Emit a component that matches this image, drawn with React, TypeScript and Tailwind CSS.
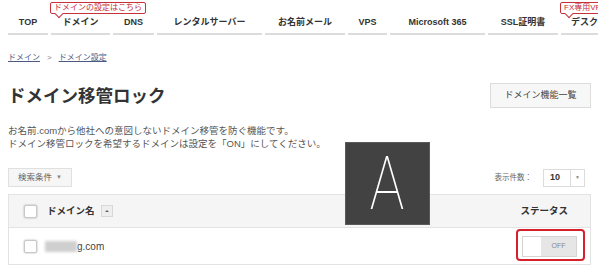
import React from 'react'

const font = "font-['Liberation_Sans','Noto_Sans_CJK_JP',sans-serif]"

const navItems = [
    { label: 'TOP', width: 'w-[40px]' },
    { label: 'ドメイン', width: 'w-[59px]' },
    { label: 'DNS', width: 'w-[41px]' },
    { label: 'レンタルサーバー', width: 'w-[105px]' },
    { label: 'お名前メール', width: 'w-[80px]' },
    { label: 'VPS', width: 'w-[39px]' },
    { label: 'Microsoft 365', width: 'w-[95px]' },
    { label: 'SSL証明書', width: 'w-[70px]' },
    { label: 'デスクトップクラウド', width: 'w-[110px]' },
]

const Tip: React.FC<{ text: string; className: string }> = ({ text, className }) => (
    <div className={`absolute top-[2px] h-[12px] px-[3px] border border-[#c8303a] rounded-[2px] bg-white text-[8px] leading-[10px] text-[#c8303a] whitespace-nowrap ${className}`}>
        {text}
        <span className="absolute left-[5px] -bottom-[4px] w-[6px] h-[6px] rotate-45 bg-white border-r border-b border-[#c8303a]" />
    </div>
)

const Checkbox: React.FC = () => (
    <span className="block w-[13px] h-[13px] rounded-[2px] bg-white border border-[#c9c9c9] shadow-[0_0_2px_rgba(0,0,0,0.35)]" />
)

export default function App() {
    return (
        <div className={`relative w-[598px] h-[274px] overflow-hidden bg-white ${font}`}>
            {/* global nav */}
            <div className="relative">
                <nav className="flex gap-[3px] pl-[8px] pt-[12px] whitespace-nowrap">
                    {navItems.map((item) => (
                        <div
                            key={item.label}
                            className={`${item.width} shrink-0 h-[23px] flex items-center justify-center border-b-2 border-[#dcdcdc] text-[9px] font-bold text-[#333]`}
                        >
                            {item.label}
                        </div>
                    ))}
                </nav>
                <Tip text="ドメインの設定はこちら" className="left-[50px]" />
                <Tip text="FX専用VPS" className="left-[560px]" />
            </div>

            <div className="pl-[8px] pr-[7px]">
                {/* breadcrumb */}
                <div className="mt-[17px] flex items-center text-[8px] leading-[12px]">
                    <span className="text-[#4b5a82] underline">ドメイン</span>
                    <span className="mx-[7px] text-[#888]">&gt;</span>
                    <span className="text-[#4b5a82] underline">ドメイン設定</span>
                </div>

                {/* title */}
                <div className="mt-[19px] h-[25px] flex items-center justify-between">
                    <h1 className="pt-[3px] text-[17.5px] font-bold text-[#333] leading-none">ドメイン移管ロック</h1>
                    <button className="w-[101px] h-[25px] border border-[#dcdcdc] bg-[#f7f7f7] text-[9px] text-[#444]">
                        ドメイン機能一覧
                    </button>
                </div>

                {/* description */}
                <p className="mt-[16px] text-[9.5px] leading-[13px] text-[#555]">
                    お名前.comから他社への意図しないドメイン移管を防ぐ機能です。
                    <br />
                    ドメイン移管ロックを希望するドメインは設定を「ON」にしてください。
                </p>

                {/* controls */}
                <div className="mt-[18px] flex items-center justify-between">
                    <button className="w-[64px] h-[19px] flex items-center justify-center gap-[4px] border border-[#e0e0e0] bg-[#f6f6f6] text-[8.5px] text-[#666]">
                        検索条件<span className="text-[6px] text-[#888]">▼</span>
                    </button>
                    <div className="flex items-center mr-[6px]">
                        <span className="text-[7.5px] text-[#666] mr-[11px]">表示件数：</span>
                        <div className="w-[42px] h-[18px] flex border border-[#dcdcdc] bg-white">
                            <span className="flex-1 pl-[6px] flex items-center text-[9px] font-bold text-[#333]">10</span>
                            <span className="w-[14px] border-l border-[#dcdcdc] flex items-center justify-center text-[5px] text-[#888]">▼</span>
                        </div>
                    </div>
                </div>

                {/* table */}
                <div className="mt-[7px]">
                    <div className="h-[34px] flex items-center justify-between border border-[#e3e3e3] bg-[#f5f5f5] pl-[15px] pr-[22px]">
                        <div className="flex items-center">
                            <Checkbox />
                            <span className="ml-[10px] text-[9.5px] font-bold text-[#333]">ドメイン名</span>
                            <span className="ml-[6px] w-[12px] h-[12px] flex items-center justify-center border border-[#d8d8d8] bg-[#eee]">
                                <span className="w-0 h-0 border-l-[2px] border-r-[2px] border-b-[2px] border-l-transparent border-r-transparent border-b-[#666]" />
                            </span>
                        </div>
                        <span className="text-[9.5px] font-bold text-[#333]">ステータス</span>
                    </div>
                    <div className="h-[37px] flex items-center justify-between border-x border-b border-[#e3e3e3] pl-[15px] pr-[13px]">
                        <div className="flex items-center">
                            <Checkbox />
                            <span className="ml-[8px] w-[32px] h-[11px] bg-[#cfcfcf] blur-[1.5px]" />
                            <span className="text-[10px] text-[#444]">g.com</span>
                        </div>
                        <div className="relative">
                            <div className="w-[55px] h-[21px] flex border border-[#d4d4d4]">
                                <span className="w-[18px] bg-white" />
                                <span className="flex-1 bg-[#e6e6e6] flex items-center justify-center text-[7px] text-[#888]">OFF</span>
                            </div>
                            <span className="absolute -left-[6px] -right-[8px] -top-[7px] -bottom-[4px] border-2 border-[#d6202c] rounded-[4px]" />
                        </div>
                    </div>
                </div>
            </div>

            {/* caption overlay */}
            <div className="absolute left-[345px] top-[142px] w-[85px] h-[83px] bg-[#424242] border border-[#5a5a5a] flex items-center justify-center">
                <span className="font-['Roboto',sans-serif] font-thin text-[74px] leading-none text-white scale-x-[0.78]">A</span>
            </div>
        </div>
    )
}
